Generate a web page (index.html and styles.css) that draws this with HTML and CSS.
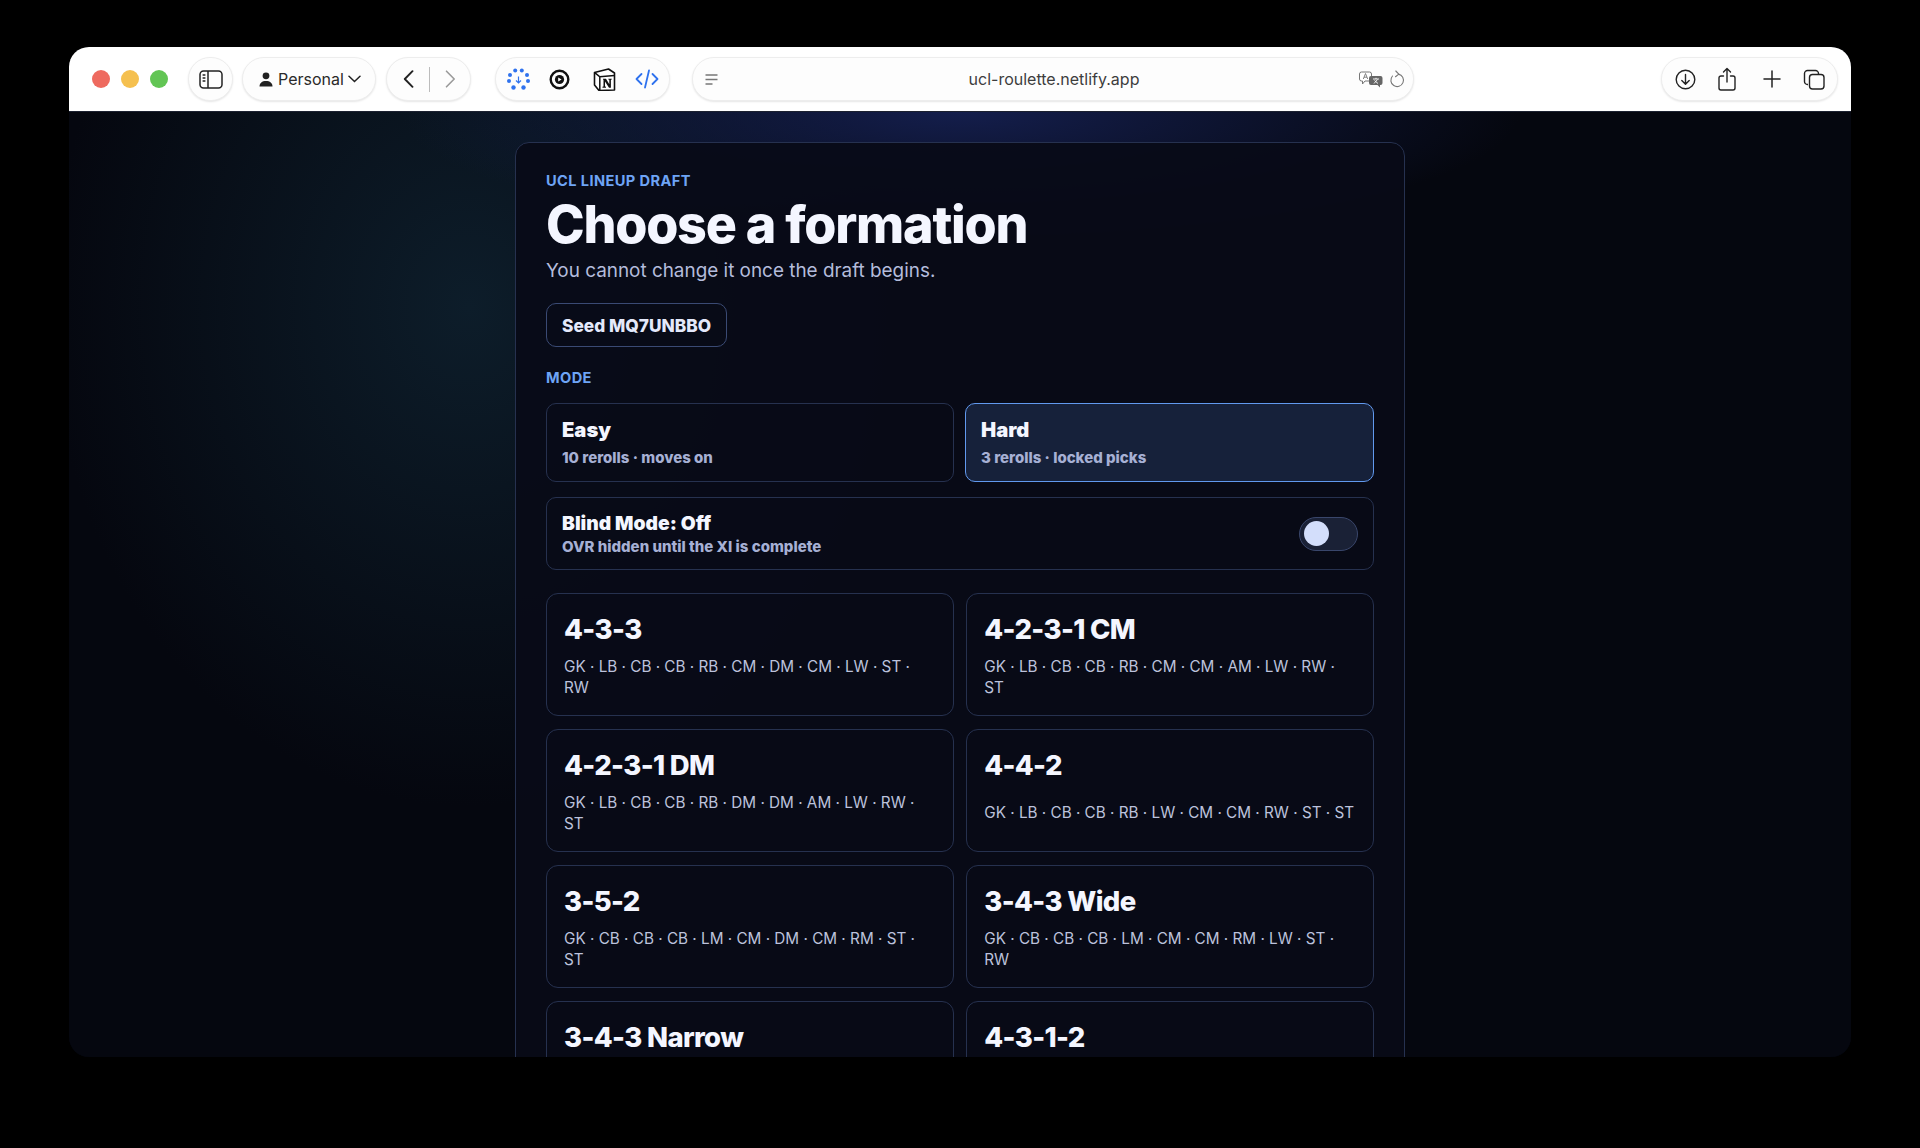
FILE: index.html
```html
<!DOCTYPE html>
<html lang="en">
<head>
    <meta charset="UTF-8">
    <meta name="viewport" content="width=device-width, initial-scale=1.0">
    <title>UCL Lineup Draft</title>
    <link rel="stylesheet" href="styles.css">
</head>
<body>

<div class="window">
    <!-- Browser toolbar -->
    <header class="toolbar">
        <div class="lights">
            <span class="light red"></span>
            <span class="light yellow"></span>
            <span class="light green"></span>
        </div>

        <div class="pill pill-sidebar">
            <svg width="24" height="19" viewBox="0 0 24 19" fill="none" stroke="#222" stroke-width="1.5">
                <rect x="1" y="1" width="22" height="17" rx="3.5"/>
                <path d="M9 1v17"/>
                <path d="M3.6 5h2.8M3.6 8h2.8M3.6 11h2.8" stroke-width="1.3"/>
            </svg>
        </div>

        <div class="pill pill-profile">
            <svg width="14" height="15" viewBox="0 0 14 15" fill="#222">
                <circle cx="7" cy="3.8" r="3.4"/>
                <path d="M0.5 14.6c0-3.6 2.6-5.6 6.5-5.6s6.5 2 6.5 5.6z"/>
            </svg>
            <span class="profile-name">Personal</span>
            <svg width="13" height="8" viewBox="0 0 13 8" fill="none" stroke="#222" stroke-width="1.5" stroke-linecap="round">
                <path d="M1 1.2l5.5 5.3L12 1.2"/>
            </svg>
        </div>

        <div class="pill pill-nav">
            <svg width="11" height="18" viewBox="0 0 11 18" fill="none" stroke="#222" stroke-width="1.9" stroke-linecap="round" stroke-linejoin="round">
                <path d="M9.5 1.2L1.8 9l7.7 7.8"/>
            </svg>
            <span class="nav-divider"></span>
            <svg width="11" height="18" viewBox="0 0 11 18" fill="none" stroke="#9a9a9a" stroke-width="1.6" stroke-linecap="round" stroke-linejoin="round">
                <path d="M1.5 1.2L9.2 9l-7.7 7.8"/>
            </svg>
        </div>

        <div class="pill pill-extensions">
            <svg width="23" height="23" viewBox="0 0 23 23" fill="#2f72ee">
                <circle cx="8.2" cy="2.6" r="2"/>
                <circle cx="14.8" cy="2.6" r="2"/>
                <circle cx="3" cy="7" r="2"/>
                <circle cx="20" cy="7" r="2"/>
                <circle cx="2" cy="13" r="2"/>
                <circle cx="21" cy="13" r="2"/>
                <circle cx="6.5" cy="19.5" r="2.2"/>
                <circle cx="16.5" cy="19.5" r="2.2"/>
                <path d="M11.5 8.5v6M9 12.5l2.5 2.5 2.5-2.5" fill="none" stroke="#2f72ee" stroke-width="1.2"/>
            </svg>
            <svg width="21" height="21" viewBox="0 0 21 21">
                <circle cx="10.5" cy="10.5" r="8.8" fill="none" stroke="#111" stroke-width="2.4"/>
                <circle cx="10.5" cy="10.5" r="4.6" fill="#111"/>
                <path d="M9.2 8.4l3.4 2.1-3.4 2.1z" fill="#fff"/>
            </svg>
            <svg class="notion" width="23" height="23" viewBox="0 0 23 23">
                <path d="M1.5 4.500L15.500 1l6 4v17L6 22.500 1.500 17z" fill="#fff" stroke="#111" stroke-width="1.600" stroke-linejoin="round"/>
                <path d="M2 4.800l4.800 4 14.500-1.300M6.800 8.800V22" fill="none" stroke="#111" stroke-width="1.500"/>
                <path d="M10 10.800h3l3.300 5.400v-4.400l-1-.2v-.8h3.500v.8l-.9.2v8h-1.900l-4-6.200v4.900l1 .2v1h-3.500v-1l1-.2v-6.800l-.5-.1z" fill="#111"/>
            </svg>
            <svg width="24" height="20" viewBox="0 0 24 20" fill="none" stroke="#2f72ee" stroke-width="1.800" stroke-linecap="round" stroke-linejoin="round">
                <path d="M6.500 5L1.500 10l5 5M17.500 5l5 5-5 5M14 1.500L10 18.500"/>
            </svg>
        </div>

        <div class="pill pill-address">
            <svg width="13" height="11" viewBox="0 0 13 11" fill="none" stroke="#777" stroke-width="1.300">
                <path d="M0.500 1h12M0.500 5.500h12M0.500 10h7"/>
            </svg>
            <span class="address-text">ucl-roulette.netlify.app</span>
            <svg width="24" height="17" viewBox="0 0 24 17">
                <path d="M2.500 1h8a2 2 0 0 1 2 2v5a2 2 0 0 1-2 2H6l-2.500 3v-3h-1a2 2 0 0 1-2-2V3a2 2 0 0 1 2-2z" fill="#fff" stroke="#777" stroke-width="1"/>
                <path d="M4.300 8l2.200-5.500L8.700 8M5 6.200h3" fill="none" stroke="#777" stroke-width="0.900"/>
                <path d="M12 5h9.500a2 2 0 0 1 2 2v5a2 2 0 0 1-2 2h-.5v2.500L18.500 14H12a2 2 0 0 1-2-2V7a2 2 0 0 1 2-2z" fill="#666"/>
                <path d="M14 8h6M17 6.800v1.200M15 12.500l3.500-4M15.500 9.500l3.500 3" fill="none" stroke="#fff" stroke-width="0.900"/>
            </svg>
            <svg class="reload" width="16" height="18" viewBox="0 0 16 18" fill="none" stroke="#777" stroke-width="1.100" stroke-linecap="round" stroke-linejoin="round">
                <path d="M9.500 4.100A6.300 6.300 0 1 1 3.500 6"/>
                <path d="M6.800 1l3 3.100-3.300 2.600"/>
            </svg>
        </div>

        <div class="pill pill-actions">
            <svg width="21" height="21" viewBox="0 0 21 21" fill="none" stroke="#222" stroke-width="1.400" stroke-linecap="round" stroke-linejoin="round">
                <circle cx="10.500" cy="10.500" r="9.300"/>
                <path d="M10.500 5.500v9.500M6.800 11.500l3.700 3.700 3.700-3.700"/>
            </svg>
            <svg width="18" height="24" viewBox="0 0 18 24" fill="none" stroke="#222" stroke-width="1.400" stroke-linecap="round" stroke-linejoin="round">
                <path d="M5.500 9H3a2 2 0 0 0-2 2v10a2 2 0 0 0 2 2h12a2 2 0 0 0 2-2V11a2 2 0 0 0-2-2h-2.500"/>
                <path d="M9 15V1.500M5.500 5L9 1.500 12.500 5"/>
            </svg>
            <svg class="plus" width="18" height="18" viewBox="0 0 18 18" fill="none" stroke="#222" stroke-width="1.500" stroke-linecap="round">
                <path d="M9 1v16M1 9h16"/>
            </svg>
            <svg width="22" height="21" viewBox="0 0 22 21" fill="none" stroke="#222" stroke-width="1.400">
                <rect x="6.500" y="5.500" width="14.500" height="14.500" rx="3"/>
                <path d="M5 15.500h-.5A3 3 0 0 1 1.500 12.500V4.500a3 3 0 0 1 3-3h8a3 3 0 0 1 3 3v1"/>
            </svg>
        </div>
    </header>

    <!-- Page content -->
    <main class="page">
        <section class="panel">
            <div class="eyebrow">UCL LINEUP DRAFT</div>
            <h1>Choose a formation</h1>
            <p class="lead">You cannot change it once the draft begins.</p>

            <button class="seed" type="button">Seed MQ7UNBBO</button>

            <div class="eyebrow mode-label">MODE</div>
            <div class="modes">
                <button class="mode" type="button">
                    <span class="mode-title">Easy</span>
                    <span class="mode-sub">10 rerolls · moves on</span>
                </button>
                <button class="mode active" type="button">
                    <span class="mode-title">Hard</span>
                    <span class="mode-sub">3 rerolls · locked picks</span>
                </button>
            </div>

            <div class="blind">
                <div>
                    <div class="blind-title">Blind Mode: Off</div>
                    <div class="blind-sub">OVR hidden until the XI is complete</div>
                </div>
                <span class="toggle"><span class="knob"></span></span>
            </div>

            <div class="formations">
                <button class="formation" type="button">
                    <span class="formation-name">4-3-3</span>
                    <span class="formation-pos">GK · LB · CB · CB · RB · CM · DM · CM · LW · ST · RW</span>
                </button>
                <button class="formation" type="button">
                    <span class="formation-name">4-2-3-1 CM</span>
                    <span class="formation-pos">GK · LB · CB · CB · RB · CM · CM · AM · LW · RW · ST</span>
                </button>
                <button class="formation" type="button">
                    <span class="formation-name">4-2-3-1 DM</span>
                    <span class="formation-pos">GK · LB · CB · CB · RB · DM · DM · AM · LW · RW · ST</span>
                </button>
                <button class="formation" type="button">
                    <span class="formation-name">4-4-2</span>
                    <span class="formation-pos">GK · LB · CB · CB · RB · LW · CM · CM · RW · ST · ST</span>
                </button>
                <button class="formation" type="button">
                    <span class="formation-name">3-5-2</span>
                    <span class="formation-pos">GK · CB · CB · CB · LM · CM · DM · CM · RM · ST · ST</span>
                </button>
                <button class="formation" type="button">
                    <span class="formation-name">3-4-3 Wide</span>
                    <span class="formation-pos">GK · CB · CB · CB · LM · CM · CM · RM · LW · ST · RW</span>
                </button>
                <button class="formation" type="button">
                    <span class="formation-name">3-4-3 Narrow</span>
                </button>
                <button class="formation" type="button">
                    <span class="formation-name">4-3-1-2</span>
                </button>
            </div>
        </section>
    </main>
</div>

</body>
</html>
```

FILE: styles.css
```css
* {
    box-sizing: border-box;
}
html, body {
    height: 100%;
}
body {
    margin: 0;
    padding: 47px 69px 91px;
    background-color: #000;
    font-family: Inter, "Liberation Sans", sans-serif;
    overflow: hidden;
}
button {
    font-family: inherit;
    text-align: left;
    cursor: pointer;
}

/* window + toolbar */
.window {
    height: 1010px;
    border-radius: 20px;
    overflow: hidden;
    display: flex;
    flex-direction: column;
    background-color: #05070f;
}
.toolbar {
    flex: none;
    height: 65px;
    display: flex;
    align-items: flex-start;
    padding: 10px 13px 0 23px;
    background-color: #fff;
    border-bottom: 1px solid #1c2130;
}
.lights {
    display: flex;
    gap: 11px;
    margin: 13px 20px 0 0;
}
.light {
    width: 18px;
    height: 18px;
    border-radius: 50%;
}
.red { background-color: #ee6a5f; }
.yellow { background-color: #f5c04f; }
.green { background-color: #62c554; }

.pill {
    height: 44px;
    display: flex;
    align-items: center;
    border-radius: 22px;
    background-color: #fdfdfd;
    border: 1px solid #ededed;
    box-shadow: 0 1px 2px rgba(0, 0, 0, 0.1);
}
.pill-sidebar {
    width: 45px;
    justify-content: center;
    margin-right: 9px;
}
.pill-profile {
    width: 134px;
    padding-left: 16px;
    margin-right: 10px;
}
.profile-name {
    font-size: 16px;
    color: #2a2a2a;
    margin: 0 4px 0 5px;
}
.pill-nav {
    width: 85px;
    padding-left: 16px;
    margin-right: 24px;
}
.nav-divider {
    width: 1px;
    height: 25px;
    background-color: #bcbcbc;
    margin: 0 15px;
}
.pill-extensions {
    width: 175px;
    padding-left: 11px;
    gap: 19px;
    margin-right: 22px;
}
.notion {
    margin-left: 4px;
}
.pill-address {
    width: 722px;
    padding: 0 8px 0 12px;
}
.address-text {
    flex: 1;
    text-align: center;
    font-size: 16px;
    color: #3d3d3d;
    padding-left: 31px;
}
.reload {
    margin-left: 6px;
}
.pill-actions {
    width: 177px;
    margin-left: auto;
    padding-left: 13px;
    gap: 22px;
}
.plus {
    margin-left: 5px;
}

/* page */
.page {
    flex: 1;
    min-height: 0;
    padding-top: 30px;
    background:
        radial-gradient(ellipse 560px 125px at 50% 0, #141e4c, transparent),
        radial-gradient(ellipse 420px 500px at 400px 195px, #0d1d2a, transparent),
        #05070f;
}
.panel {
    width: 890px;
    margin: 0 auto;
    padding: 30px;
    background-color: rgba(8, 11, 23, 0.94);
    border: 1px solid #26314f;
    border-radius: 14px;
}
.eyebrow {
    font-size: 14.6px;
    line-height: 17px;
    font-weight: 700;
    letter-spacing: 0.4px;
    color: #6ea4f5;
}
h1 {
    margin: 5px 0 0;
    font-size: 52px;
    line-height: 60px;
    font-weight: 800;
    letter-spacing: -1.25px;
    color: #f4f6ff;
}
.lead {
    margin: 2px 0 0;
    font-size: 18.9px;
    line-height: 28px;
    color: #b4bcdc;
}
.seed {
    display: block;
    height: 44px;
    margin-top: 18px;
    padding: 0 15px;
    background-color: transparent;
    border: 1px solid #3a4a74;
    border-radius: 10px;
    color: #e4e9fb;
    font-size: 17.3px;
    font-weight: 800;
}
.mode-label {
    margin-top: 23px;
}
.modes {
    display: grid;
    grid-template-columns: 408px 1fr;
    gap: 11px;
    margin-top: 16px;
}
.mode {
    height: 79px;
    padding: 0 15px 1px;
    display: flex;
    flex-direction: column;
    justify-content: center;
    gap: 7px;
    background-color: transparent;
    border: 1px solid #26314f;
    border-radius: 10px;
}
.mode.active {
    background-color: #16213a;
    border-color: #6199ee;
}
.mode-title {
    font-size: 20.2px;
    line-height: 24px;
    font-weight: 900;
    color: #f4f6ff;
}
.mode-sub {
    font-size: 15px;
    line-height: 18px;
    font-weight: 800;
    color: #a6b0d4;
}
.blind {
    height: 73px;
    margin-top: 15px;
    padding: 0 15px;
    display: flex;
    align-items: center;
    justify-content: space-between;
    border: 1px solid #26314f;
    border-radius: 10px;
}
.blind-title {
    font-size: 19.3px;
    line-height: 24px;
    font-weight: 900;
    color: #f4f6ff;
}
.blind-sub {
    margin-top: 3px;
    font-size: 15px;
    line-height: 18px;
    font-weight: 800;
    color: #a6b0d4;
}
.toggle {
    width: 59px;
    height: 34px;
    padding: 3.500px 4px;
    background-color: #1a2136;
    border: 1px solid #39466b;
    border-radius: 17px;
}
.knob {
    display: block;
    width: 25px;
    height: 25px;
    border-radius: 50%;
    background-color: #d3defb;
}
.formations {
    display: grid;
    grid-template-columns: 1fr 1fr;
    gap: 13px 12.500px;
    margin-top: 23px;
}
.formation {
    height: 123px;
    padding: 16px 17px 13px;
    display: grid;
    grid-template-rows: auto 1fr;
    background-color: transparent;
    border: 1px solid #26314f;
    border-radius: 12px;
}
.formation-name {
    margin-bottom: 4px;
    font-size: 27.500px;
    line-height: 38px;
    font-weight: 800;
    letter-spacing: -0.65px;
    color: #f4f6ff;
}
.formation-pos {
    align-self: center;
    font-size: 15.280px;
    line-height: 21.500px;
    color: #bcc2dc;
}
```
